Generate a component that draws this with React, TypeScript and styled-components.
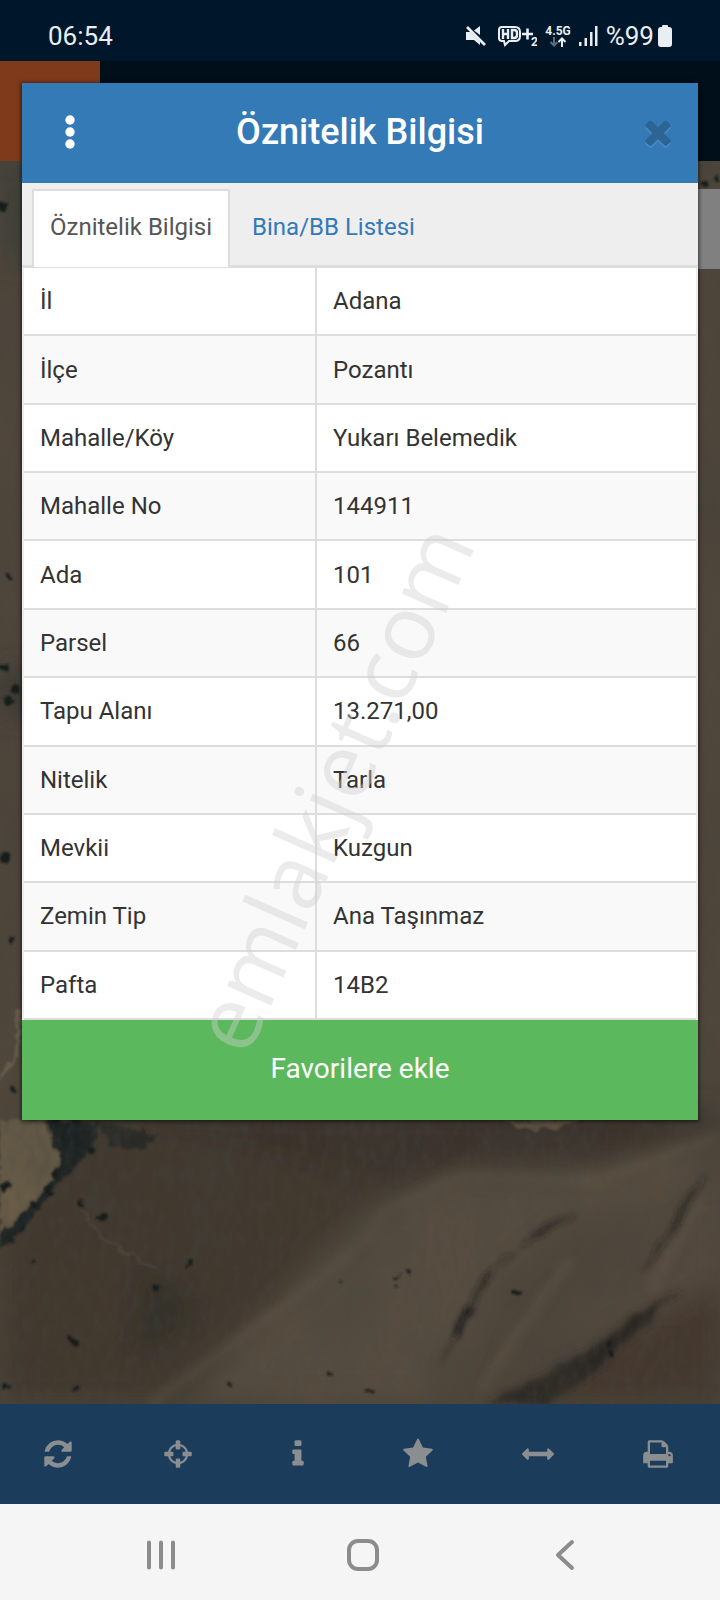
import React from 'react';
import styled, { createGlobalStyle } from 'styled-components';

const GlobalStyle = createGlobalStyle`
  *, *::before, *::after { box-sizing: border-box; }
  body {
    margin: 0;
    background: #f5f5f5;
    font-family: Roboto, "Noto Sans", sans-serif;
    font-size: 24px;
    line-height: 32px;
    color: #333;
  }
  button { border: 0; background: none; font: inherit; color: inherit; cursor: pointer; }
`;

const Screen = styled.div`
  display: flex;
  flex-direction: column;
  min-height: 100vh;
`;

/* Status bar */

const StatusBar = styled.header`
  display: flex;
  align-items: center;
  justify-content: space-between;
  height: 61px;
  padding: 11px 48px 0;
  background: #00172b;
  color: #e9eef2;
`;

const Clock = styled.time`
  font-size: 26px;
`;

const StatusIcons = styled.div`
  display: flex;
  align-items: center;
  gap: 8px;
  svg { display: block; fill: currentColor; }
`;

const Battery = styled.div`
  display: flex;
  align-items: center;
  gap: 4px;
  font-size: 26px;
`;

const Network = styled.div`
  display: flex;
  flex-direction: column;
  align-items: center;
  font-size: 12px;
  font-weight: 700;
  line-height: 12px;
`;

/* Map with the app header behind the dialog */

const Stage = styled.main`
  display: grid;
  flex: 1;
  > * { grid-area: 1 / 1; }
`;

const Backdrop = styled.div`
  display: flex;
  flex-direction: column;
  min-width: 0;
`;

const AppHeader = styled.div`
  height: 100px;
  background: #000f1a;
`;

const MenuTile = styled.div`
  width: 100px;
  height: 100%;
  background: #7f391b;
`;

const MapArea = styled.div`
  position: relative;
  flex: 1;
  overflow: hidden;
  background: #4a4138;
  > svg { position: absolute; inset: 0; width: 100%; height: 100%; }
`;

const MapControl = styled.div`
  position: absolute;
  top: 28px;
  right: 0;
  width: 80px;
  height: 80px;
  background: #808080;
`;

/* Dialog */

const Dialog = styled.section`
  position: relative;
  align-self: start;
  min-width: 0;
  margin: 22px;
  background: #fff;
  box-shadow: 0 1px 4px 1px rgba(0, 0, 0, 0.55);
`;

const DialogHeader = styled.div`
  display: grid;
  grid-template-columns: 96px 1fr 80px;
  align-items: center;
  height: 100px;
  padding-bottom: 2px;
  background: #337ab7;
`;

const DialogTitle = styled.h1`
  margin: 0;
  padding-right: 16px;
  color: #fff;
  font-size: 36px;
  font-weight: 500;
  line-height: 48px;
  text-align: center;
`;

const HeaderButton = styled.button`
  display: grid;
  place-items: center;
  height: 100%;
  padding: 0;
`;

const TabList = styled.div`
  display: flex;
  gap: 4px;
  height: 84px;
  padding: 6px 10px 0;
  background: #eee;
  border-bottom: 2px solid #ddd;
`;

const Tab = styled.button<{ $active?: boolean }>`
  height: 78px;
  padding: 0 16px 4px;
  border: 2px solid ${p => (p.$active ? '#ddd' : 'transparent')};
  border-bottom: 0;
  border-radius: 2px 2px 0 0;
  background: ${p => (p.$active ? '#fff' : 'transparent')};
  color: ${p => (p.$active ? '#555' : '#337ab7')};
  white-space: nowrap;
`;

const AttributeTable = styled.table`
  width: 100%;
  height: 753px;
  border: 2px solid #ddd;
  border-width: 1px 2px 0;
  border-color: #ddd #ececec;
  border-spacing: 0;
  tr:nth-child(even) { background: #f9f9f9; }
`;

const NameCell = styled.th`
  width: 293px;
  padding: 0 16px;
  border: solid #ddd;
  border-width: 0 2px 2px 0;
  font-weight: 400;
  text-align: left;
`;

const ValueCell = styled.td`
  padding: 0 16px;
  border-bottom: 2px solid #ddd;
`;

const FavoriteButton = styled.button`
  display: block;
  width: 100%;
  height: 100px;
  padding: 0 0 2px;
  background: #5cb85c;
  color: #fff;
  font-size: 28px;
`;

const Watermark = styled.span`
  position: absolute;
  top: 704px;
  left: 308px;
  transform: translate(-50%, -50%) rotate(-66deg);
  color: rgba(207, 207, 207, 0.42);
  font-family: "Open Sans", sans-serif;
  font-size: 90px;
  line-height: 122px;
  white-space: nowrap;
  pointer-events: none;
`;

/* Bottom bars */

const Toolbar = styled.nav`
  display: grid;
  grid-template-columns: repeat(6, 1fr);
  height: 100px;
  background: #1b3d5b;
  color: #8b8e91;
`;

const ToolButton = styled.button`
  display: grid;
  place-items: center;
  padding: 0 4px 0 0;
`;

const NavBar = styled.nav`
  display: grid;
  grid-template-columns: repeat(3, 1fr);
  height: 96px;
  padding: 0 54px 0 60px;
  background: #f5f5f5;
`;

const NavButton = styled.button`
  display: grid;
  place-items: center;
  padding: 6px 0 0;
  svg { fill: none; stroke: #8c8c8c; stroke-width: 4; stroke-linecap: round; stroke-linejoin: round; }
`;

const rows: [string, string][] = [
  ['İl', 'Adana'],
  ['İlçe', 'Pozantı'],
  ['Mahalle/Köy', 'Yukarı Belemedik'],
  ['Mahalle No', '144911'],
  ['Ada', '101'],
  ['Parsel', '66'],
  ['Tapu Alanı', '13.271,00'],
  ['Nitelik', 'Tarla'],
  ['Mevkii', 'Kuzgun'],
  ['Zemin Tip', 'Ana Taşınmaz'],
  ['Pafta', '14B2'],
];

const tools = [
  {
    label: 'Yenile',
    path: 'M1511 928q0 5-1 7-64 268-268 434.5T764 1536q-146 0-282.5-55T238 1324l-129 129q-19 19-45 19t-45-19-19-45V960q0-26 19-45t45-19h448q26 0 45 19t19 45-19 45l-137 137q71 66 161 102t187 36q134 0 250-65t186-179q11-17 53-117 8-23 30-23h192q13 0 22.5 9.5t9.5 22.5zm25-800v448q0 26-19 45t-45 19h-448q-26 0-45-19t-19-45 19-45l138-138Q969 256 768 256q-134 0-250 65T332 500q-11 17-53 117-8 23-30 23H50q-13 0-22.5-9.5T18 608v-7q65-268 270-434.5T768 0q146 0 284 55.5T1297 212l130-129q19-19 45-19t45 19 19 45z',
    box: '-128 -128 1792 1792',
  },
  {
    label: 'Konum',
    path: 'M1325 1024h-109q-26 0-45-19t-19-45v-128q0-26 19-45t45-19h109q-32-108-112.5-188.5T1024 467v109q0 26-19 45t-45 19H832q-26 0-45-19t-19-45V467q-108 32-188.5 112.5T467 768h109q26 0 45 19t19 45v128q0 26-19 45t-45 19H467q32 108 112.5 188.5T768 1325v-109q0-26 19-45t45-19h128q26 0 45 19t19 45v109q108-32 188.5-112.5T1325 1024zm339-192v128q0 26-19 45t-45 19h-143q-37 161-154.5 278.5T1024 1457v143q0 26-19 45t-45 19H832q-26 0-45-19t-19-45v-143q-161-37-278.5-154.5T335 1024H192q-26 0-45-19t-19-45V832q0-26 19-45t45-19h143q37-161 154.5-278.5T768 335V192q0-26 19-45t45-19h128q26 0 45 19t19 45v143q161 37 278.5 154.5T1457 768h143q26 0 45 19t19 45z',
  },
  {
    label: 'Bilgi',
    path: 'M1216 1344v128q0 26-19 45t-45 19H640q-26 0-45-19t-19-45v-128q0-26 19-45t45-19h64V896h-64q-26 0-45-19t-19-45V704q0-26 19-45t45-19h384q26 0 45 19t19 45v576h64q26 0 45 19t19 45zm-128-1152v192q0 26-19 45t-45 19H768q-26 0-45-19t-19-45V192q0-26 19-45t45-19h256q26 0 45 19t19 45z',
  },
  {
    label: 'Favoriler',
    path: 'M1728 647q0 22-26 48l-363 354 86 500q1 7 1 20 0 21-10.5 35.5T1385 1619q-19 0-40-12l-449-236-449 236q-22 12-40 12-21 0-31.5-14.5T365 1569q0-6 2-20l86-500L89 695q-25-27-25-48 0-37 56-46l502-73L847 73q19-41 49-41t49 41l225 455 502 73q56 9 56 46z',
  },
  {
    label: 'Ölç',
    path: 'M1792 896q0 26-19 45l-256 256q-19 19-45 19t-45-19-19-45v-128H384v128q0 26-19 45t-45 19-45-19L19 941Q0 922 0 896t19-45l256-256q19-19 45-19t45 19 19 45v128h1024V640q0-26 19-45t45-19 45 19l256 256q19 19 19 45z',
  },
  {
    label: 'Yazdır',
    path: 'M448 1536h896v-256H448v256zm0-640h896V512h-160q-40 0-68-28t-28-68V256H448v640zm1152 64q0-26-19-45t-45-19-45 19-19 45 19 45 45 19 45-19 19-45zm128 0v416q0 13-9.5 22.5t-22.5 9.5h-224v160q0 40-28 68t-68 28H416q-40 0-68-28t-28-68v-160H96q-13 0-22.5-9.5T64 1376V960q0-79 56.5-135.5T256 768h64V224q0-40 28-68t68-28h672q40 0 88 20t76 48l152 152q28 28 48 76t20 88v256h64q79 0 135.5 56.5T1728 960z',
  },
];

const closePath =
  'M1490 1322q0 40-28 68l-136 136q-28 28-68 28t-68-28l-294-294-294 294q-28 28-68 28t-68-28l-136-136q-28-28-28-68t28-68l294-294-294-294q-28-28-28-68t28-68l136-136q28-28 68-28t68 28l294 294 294-294q28-28 68-28t68 28l136 136q28 28 28 68t-28 68l-294 294 294 294q28 28 28 68z';

const shrubs: [number, number, number][] = [
  [6, 1186, 4], [57, 1174, 4], [48, 1192, 4], [35, 1206, 4], [93, 1150, 5], [101, 1217, 4],
  [82, 1202, 3], [190, 1263, 3], [157, 1286, 3], [73, 1341, 5], [6, 1388, 3], [76, 1387, 3],
  [516, 1293, 3], [610, 1344, 3], [611, 1354, 3], [398, 1276, 2], [409, 1272, 2], [396, 1288, 2],
  [340, 1283, 2], [330, 1373, 2], [229, 1386, 2], [370, 1392, 2], [32, 1264, 2],
  [3, 206, 5], [5, 859, 5], [11, 941, 3], [10, 578, 3], [705, 182, 3], [716, 178, 3],
  [14, 1089, 3], [4, 668, 4], [15, 690, 4], [8, 700, 4],
];

const Terrain = () => (
  <svg viewBox="0 160 720 1244" preserveAspectRatio="xMidYMax slice" aria-hidden="true">
    <defs>
      <filter id="soft" x="-20%" y="-20%" width="140%" height="140%">
        <feGaussianBlur stdDeviation="14" />
      </filter>
      <filter id="ridge" x="-20%" y="-20%" width="140%" height="140%">
        <feGaussianBlur stdDeviation="5" />
      </filter>
      <filter id="rough" x="-20%" y="-20%" width="140%" height="140%">
        <feTurbulence type="fractalNoise" baseFrequency="0.1" numOctaves="3" seed="4" />
        <feDisplacementMap in="SourceGraphic" scale="12" xChannelSelector="R" yChannelSelector="G" />
        <feGaussianBlur stdDeviation="1.3" />
      </filter>
      <filter id="gully" x="-20%" y="-20%" width="140%" height="140%">
        <feTurbulence type="fractalNoise" baseFrequency="0.05" numOctaves="3" seed="7" />
        <feDisplacementMap in="SourceGraphic" scale="12" xChannelSelector="R" yChannelSelector="G" />
        <feGaussianBlur stdDeviation="3" />
      </filter>
      <filter id="patches" x="0" y="0" width="100%" height="100%">
        <feTurbulence type="fractalNoise" baseFrequency="0.012 0.008" numOctaves="4" seed="9" />
        <feColorMatrix values="0 0 0 0 0.05  0 0 0 0 0.05  0 0 0 0 0.04  1.6 0 0 0 -0.6" />
      </filter>
      <filter id="grain" x="0" y="0" width="100%" height="100%">
        <feTurbulence type="fractalNoise" baseFrequency="0.12 0.06" numOctaves="3" seed="2" />
        <feColorMatrix values="0 0 0 0 0.06  0 0 0 0 0.07  0 0 0 0 0.06  1.1 0 0 0 -0.42" />
      </filter>
    </defs>
    <rect y="160" width="720" height="1244" fill="#50463b" />
    <g filter="url(#soft)">
      <path d="M0 160h40v100H0z" fill="#3f4039" />
      <path d="M0 670h40v45H0z" fill="#3a3832" />
      <path d="M60 1110H560L460 1160 370 1205 300 1270 180 1404H0V1230z" fill="#42382f" />
      <path d="M100 1110H720v20L600 1160 480 1165 400 1185z" fill="#3a312a" />
      <path d="M720 1135 600 1178 460 1172 367 1217 321 1273 184 1400H440L482 1290 574 1215 690 1190z" fill="#584e41" />
      <path d="M640 1200 720 1180V1290L590 1340 500 1390z" fill="#544a3e" />
      <path d="M720 1280 611 1345 500 1404H720z" fill="#45372e" />
      <path d="M140 1260 200 1300 185 1335 130 1360z" fill="#35302b" />
    </g>
    <g fill="none" stroke="#6a5f4e" strokeWidth="9" opacity="0.4" filter="url(#ridge)">
      <path d="M150 1404Q280 1310 330 1270T380 1212L460 1176" />
      <path d="M480 1390 520 1330 570 1260" />
      <path d="M700 1200 650 1290" />
      <path d="M460 1176 600 1180 720 1135" />
    </g>
    <g filter="url(#gully)">
      <path d="M580 1210 540 1228 484 1278 456 1330 436 1372 450 1345 472 1306 504 1256 545 1232z" fill="#201f1c" />
      <path d="M470 1308 456 1336" stroke="#0e1012" strokeWidth="7" />
      <path d="M708 1172 682 1208 662 1242 643 1270 658 1252 682 1218z" fill="#1d1d1b" stroke="#1d1d1b" />
      <path d="M684 1288 640 1312 606 1338 550 1372 487 1404H545L594 1374 620 1345z" fill="#2c2822" />
    </g>
    <g filter="url(#rough)">
      <path d="M0 1120H41L62 1160 50 1188 18 1220 0 1234z" fill="#675b47" />
      <path d="M46 1120H97L92 1150 76 1165 66 1176 52 1190 28 1226 0 1250V1234L18 1219 48 1185 62 1160z" fill="#1b2020" />
      <path d="M97 1122 160 1135 140 1150 110 1145z" fill="#2c2c28" />
      <path d="M500 1120H580L560 1129H520z" fill="#5e5342" />
    </g>
    <g fill="none" filter="url(#rough)" opacity="0.4">
      <path d="M76 1200 100 1238 160 1272" stroke="#6a5c4b" strokeWidth="2" />
      <path d="M0 1080Q24 1050 18 1010" stroke="#95866b" strokeWidth="3" />
    </g>
    <rect y="160" width="720" height="1244" filter="url(#patches)" opacity="0.5" />
    <rect y="160" width="720" height="1244" filter="url(#grain)" opacity="0.5" />
    <g fill="#191b1a" filter="url(#rough)">
      {shrubs.map(([x, y, r]) => (
        <circle key={`${x}-${y}`} cx={x} cy={y} r={r} />
      ))}
    </g>
  </svg>
);

export default function App() {
  return (
    <Screen>
      <GlobalStyle />
      <StatusBar>
        <Clock>06:54</Clock>
        <StatusIcons>
          <svg width="25" height="22" viewBox="0 0 25 22" aria-label="Sessiz">
            <path d="M15 1v9L9 5.500zM1 7h4.500L15 16.500V20l-6-5H1z" />
            <path d="M2 2l18 18" stroke="currentColor" strokeWidth="2.600" />
          </svg>
          <svg width="39" height="24" viewBox="1 0 39 24" aria-label="HD+ 2">
            <path
              d="M7 17H5q-3 0-3-3V6q0-3 3-3h13q5 0 5 5v4q0 5-5 5h-6l-4 4z"
              fill="none"
              stroke="currentColor"
              strokeWidth="2"
            />
            <path
              d="M6 5v10M11 5v10M6 10h5M15 6v8h2q3 0 3-3V9q0-3-3-3z"
              fill="none"
              stroke="currentColor"
              strokeWidth="2.400"
            />
            <path d="M25 10h11M30.500 4.500v11" stroke="currentColor" strokeWidth="2.600" />
            <text x="34" y="22" fontSize="12" fontWeight="700">2</text>
          </svg>
          <Network>
            4.5G
            <svg width="18" height="10" viewBox="0 0 18 10" aria-hidden="true">
              <g fill="none" stroke="currentColor" strokeWidth="2">
                <path d="M5 0v8M1.500 5 5 8.500 8.500 5" opacity="0.4" />
                <path d="M13 10V2M9.500 5 13 1.500 16.500 5" />
              </g>
            </svg>
          </Network>
          <svg width="19" height="20" viewBox="0 0 19 20" aria-label="Sinyal">
            <path d="M0 16h2.500v4H0zM5.500 12H8v8H5.500zM11 6h2.500v14H11zM16 0h2.500v20H16z" />
          </svg>
          <Battery>
            %99
            <svg width="14" height="22" viewBox="0 0 14 22" aria-hidden="true">
              <path d="M4 1q0-1 1-1h4q1 0 1 1v1h1q3 0 3 3v14q0 3-3 3H3q-3 0-3-3V5q0-3 3-3h1z" />
            </svg>
          </Battery>
        </StatusIcons>
      </StatusBar>

      <Stage>
        <Backdrop>
          <AppHeader>
            <MenuTile />
          </AppHeader>
          <MapArea>
            <Terrain />
            <MapControl />
          </MapArea>
        </Backdrop>

        <Dialog role="dialog" aria-labelledby="dialog-title">
          <DialogHeader>
            <HeaderButton aria-label="Menü">
              <svg width="10" height="34" viewBox="0 0 10 34" fill="#fff" aria-hidden="true">
                <circle cx="5" cy="5" r="4.700" />
                <circle cx="5" cy="17" r="4.700" />
                <circle cx="5" cy="29" r="4.700" />
              </svg>
            </HeaderButton>
            <DialogTitle id="dialog-title">Öznitelik Bilgisi</DialogTitle>
            <HeaderButton aria-label="Kapat">
              <svg width="38" height="38" viewBox="0 0 1792 1792" aria-hidden="true">
                <path d={closePath} fill="#4f8cc0" transform="translate(0 90)" />
                <path d={closePath} fill="#2c6494" />
              </svg>
            </HeaderButton>
          </DialogHeader>
          <TabList role="tablist">
            <Tab $active role="tab" aria-selected="true">Öznitelik Bilgisi</Tab>
            <Tab role="tab" aria-selected="false">Bina/BB Listesi</Tab>
          </TabList>
          <AttributeTable>
            <tbody>
              {rows.map(([name, value]) => (
                <tr key={name}>
                  <NameCell scope="row">{name}</NameCell>
                  <ValueCell>{value}</ValueCell>
                </tr>
              ))}
            </tbody>
          </AttributeTable>
          <FavoriteButton>Favorilere ekle</FavoriteButton>
          <Watermark>emlakjet.com</Watermark>
        </Dialog>
      </Stage>

      <Toolbar>
        {tools.map(tool => (
          <ToolButton key={tool.label} aria-label={tool.label}>
            <svg width="32" height="32" viewBox={tool.box ?? '0 0 1792 1792'} fill="currentColor" aria-hidden="true">
              <path d={tool.path} />
            </svg>
          </ToolButton>
        ))}
      </Toolbar>

      <NavBar>
        <NavButton aria-label="Son uygulamalar">
          <svg width="32" height="32" viewBox="0 0 32 32"><path d="M4 3.500v25M16 3.500v25M28 3.500v25" /></svg>
        </NavButton>
        <NavButton aria-label="Ana ekran">
          <svg width="32" height="32" viewBox="0 0 32 32"><rect x="2" y="2" width="28" height="28" rx="9" /></svg>
        </NavButton>
        <NavButton aria-label="Geri">
          <svg width="32" height="32" viewBox="0 0 32 32"><path d="M23 3 9 16l14 13" /></svg>
        </NavButton>
      </NavBar>
    </Screen>
  );
}
